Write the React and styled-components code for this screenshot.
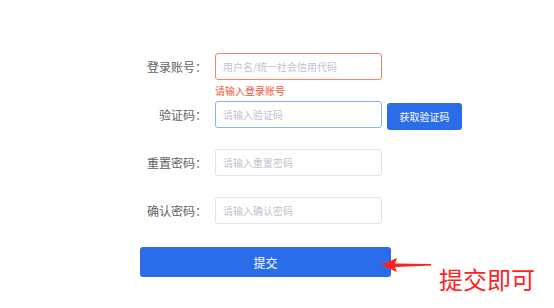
import styled, { createGlobalStyle } from 'styled-components';

const GlobalStyle = createGlobalStyle`
  html, body {
    margin: 0;
    padding: 0;
    background: #fff;
    font-family: 'Noto Sans CJK SC', 'Liberation Sans', sans-serif;
  }
`;

const Page = styled.div`
  width: 554px;
  height: 308px;
  padding: 53px 0 0 140px;
  box-sizing: border-box;
  overflow: hidden;
`;

const Form = styled.form`
  display: flex;
  flex-direction: column;
  width: 330px;
`;

const FormItem = styled.div`
  display: grid;
  grid-template-columns: 75px auto;
  align-items: start;
  padding-bottom: ${p => (p.$error ? '0' : '21px')};
`;

const Label = styled.span`
  height: 27px;
  line-height: 27px;
  padding-right: 8px;
  text-align: right;
  font-size: 12px;
  color: #606266;
  white-space: nowrap;
`;

const Control = styled.div`
  display: flex;
  align-items: flex-start;
  gap: 5px;
`;

const Field = styled.div`
  display: flex;
  flex-direction: column;
`;

const Input = styled.input`
  width: 167px;
  height: 27px;
  box-sizing: border-box;
  padding: 0 7px;
  border-width: 1px;
  border-style: solid;
  border-color: ${p => p.$border};
  border-radius: 3px;
  background: #fff;
  font-family: inherit;
  font-size: 10px;
  color: #606266;
  outline: none;

  &::placeholder {
    color: #c0c4cc;
  }
`;

const ErrorText = styled.div`
  height: 21px;
  line-height: 21px;
  font-size: 10px;
  color: #f0563a;
`;

const CodeButton = styled.button`
  width: 75px;
  height: 27px;
  margin: 2px 0 -2px;
  border: none;
  border-radius: 3px;
  background: #2b6de9;
  color: #fff;
  font-family: inherit;
  font-size: 10px;
  padding: 0;
  cursor: pointer;
`;

const SubmitRow = styled.div`
  position: relative;
  margin-top: 2px;
`;

const SubmitButton = styled.button`
  width: 251px;
  height: 30px;
  border: none;
  border-radius: 3px;
  background: #2b6de9;
  color: #fff;
  font-family: inherit;
  font-size: 12px;
  padding: 0;
  cursor: pointer;
`;

const Note = styled.div`
  position: absolute;
  left: 241px;
  top: 5px;
  display: flex;
  align-items: flex-start;
  pointer-events: none;
`;

const NoteText = styled.span`
  margin-top: 13px;
  margin-left: 8px;
  font-size: 24px;
  line-height: 28px;
  color: #ff2222;
  white-space: nowrap;
`;

function Arrow() {
  return (
    <svg width="50" height="24" viewBox="0 0 50 24">
      <polygon
        points="0,13 16,6 14,11.5 50,12 50,13.6 14,15 16,20"
        fill="#ff1f1f"
      />
    </svg>
  );
}

const fields = [
  { label: '登录账号：', placeholder: '用户名/统一社会信用代码', border: '#f3846a', error: '请输入登录账号' },
  { label: '验证码：', placeholder: '请输入验证码', border: '#86b6f2', code: true },
  { label: '重置密码：', placeholder: '请输入重置密码', border: '#e1e4ea' },
  { label: '确认密码：', placeholder: '请输入确认密码', border: '#e1e4ea' },
];

export default function App() {
  return (
    <>
      <GlobalStyle />
      <Page>
        <Form onSubmit={e => e.preventDefault()}>
          {fields.map(f => (
            <FormItem key={f.label} $error={!!f.error}>
              <Label>{f.label}</Label>
              <Control>
                <Field>
                  <Input placeholder={f.placeholder} $border={f.border} />
                  {f.error && <ErrorText>{f.error}</ErrorText>}
                </Field>
                {f.code && <CodeButton type="button">获取验证码</CodeButton>}
              </Control>
            </FormItem>
          ))}
          <SubmitRow>
            <SubmitButton type="submit">提交</SubmitButton>
            <Note>
              <Arrow />
              <NoteText>提交即可</NoteText>
            </Note>
          </SubmitRow>
        </Form>
      </Page>
    </>
  );
}
